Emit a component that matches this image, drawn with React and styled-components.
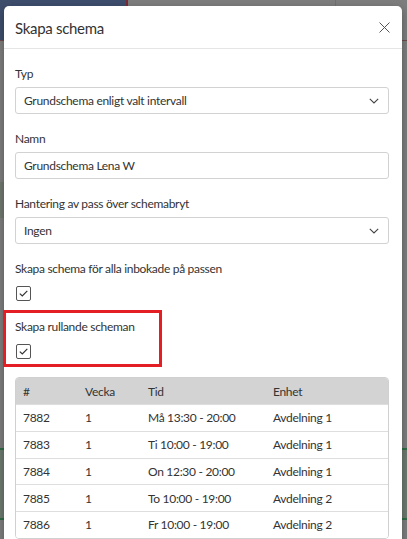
import React from "react";
import styled, { createGlobalStyle } from "styled-components";

const Global = createGlobalStyle`
  *, *::before, *::after { box-sizing: border-box; }
  html, body { margin: 0; padding: 0; }
  body {
    width: 407px; height: 539px; overflow: hidden;
    font-family: Lato, "Open Sans", sans-serif;
    color: #333;
    letter-spacing: -0.3px;
  }
`;

const Page = styled.div`
  position: relative;
  width: 407px;
  height: 539px;
  overflow: hidden;
  background: #7d7d7d;
`;

const Backdrop = styled.div`
  display: flex;
  flex-direction: column;
  height: 100%;
`;

const TopBar = styled.div`
  display: flex;
  height: 41px;
  border-bottom: 1px solid #6e4a4a;
`;

const BrandBlock = styled.div`
  width: 128px;
  background: #3d4d6c;
  border-right: 2px solid #7a2a35;
`;

const TopRest = styled.div`
  flex: 1;
  display: flex;
  justify-content: flex-end;
`;

const TopDivider = styled.div`
  width: 72px;
  border-left: 1px solid #707070;
`;

const MidCell = styled.div`
  margin-top: 141px;
  height: 36px;
  width: 8px;
  background: #6f786f;
`;

const GreenBand = styled.div`
  margin-top: 230px;
  height: 72px;
  background: #6c7a6e;
  border-top: 2px solid #2f6b45;
  border-bottom: 2px solid #2f6b45;
`;

const Modal = styled.div`
  position: absolute;
  left: 4px;
  top: 6px;
  width: 398px;
  height: 560px;
  background: #fff;
  border-radius: 5px;
  box-shadow: 0 3px 9px rgba(0, 0, 0, 0.3);
`;

const Header = styled.div`
  display: flex;
  align-items: center;
  justify-content: space-between;
  height: 43px;
  padding: 0 12px 0 11px;
  border-bottom: 1px solid #e5e5e5;
`;

const Title = styled.h4`
  margin: 0;
  font-size: 15px;
  font-weight: 400;
  color: #333;
  padding-top: 1px;
`;

const CloseButton = styled.button`
  border: 0;
  background: none;
  padding: 0;
  width: 12px;
  height: 12px;
  display: flex;
  align-items: center;
  justify-content: center;
  cursor: pointer;
`;

const Body = styled.div`
  padding: 17px 13px 0 11px;
`;

const Group = styled.div`
  margin-bottom: 17px;
`;

const Label = styled.div`
  font-size: 12px;
  line-height: 16px;
  color: #333;
  margin-bottom: 5px;
`;

const Field = styled.div`
  height: 27px;
  border: 1px solid #d2d2d2;
  border-radius: 3px;
  display: flex;
  align-items: center;
  justify-content: space-between;
  padding: 0 9px 0 8px;
  font-size: 12px;
  color: #333;
`;

const CheckGroup = styled.div`
  display: flex;
  flex-direction: column;
  align-items: flex-start;
`;

const CheckLabel = styled(Label)`
  margin-bottom: 9px;
`;

const Checkbox = styled.div`
  width: 15px;
  height: 15px;
  margin-left: 1px;
  border: 1px solid #555;
  border-radius: 2px;
  display: flex;
  align-items: center;
  justify-content: center;
  background: #fff;
`;

const Highlight = styled.div`
  margin: 9px 0 10px -12px;
  width: 159px;
  border: 3px solid #e31e24;
  padding: 6px 0 5px 9px;
`;

const Table = styled.div`
  border: 1px solid #d0d0d0;
  border-radius: 4px;
  overflow: hidden;
`;

const Row = styled.div`
  display: grid;
  grid-template-columns: 62px 63px 125px 1fr;
  height: ${(p) => (p.$head ? "26px" : "26.75px")};
  align-items: center;
  font-size: 12px;
  color: #333;
  background: ${(p) => (p.$head ? "#d3d3d3" : "#fff")};
  border-top: ${(p) => (p.$first ? "0" : "1px solid #dedede")};
`;

const Cell = styled.div`
  padding-left: 7px;
  white-space: nowrap;
`;

const Chevron = () => (
  <svg width="10" height="6" viewBox="0 0 10 6" fill="none">
    <path d="M0.8 0.8 L5 5 L9.2 0.8" stroke="#444" strokeWidth="1.1" />
  </svg>
);

const Check = () => (
  <svg width="9" height="7" viewBox="0 0 9 7" fill="none">
    <path d="M0.8 3.6 L3.3 6 L8.3 0.8" stroke="#333" strokeWidth="1.2" />
  </svg>
);

const CloseIcon = () => (
  <svg width="11" height="11" viewBox="0 0 11 11" fill="none">
    <path d="M0.5 0.5 L10.5 10.5 M10.5 0.5 L0.5 10.5" stroke="#555" strokeWidth="1" />
  </svg>
);

const rows = [
  ["7882", "1", "Må 13:30 - 20:00", "Avdelning 1"],
  ["7883", "1", "Ti 10:00 - 19:00", "Avdelning 1"],
  ["7884", "1", "On 12:30 - 20:00", "Avdelning 1"],
  ["7885", "1", "To 10:00 - 19:00", "Avdelning 2"],
  ["7886", "1", "Fr 10:00 - 19:00", "Avdelning 2"],
];

export default function App() {
  return (
    <>
      <Global />
      <Page>
        <Backdrop>
          <TopBar>
            <BrandBlock />
            <TopRest>
              <TopDivider />
            </TopRest>
          </TopBar>
          <MidCell />
          <GreenBand />
        </Backdrop>
        <Modal>
          <Header>
            <Title>Skapa schema</Title>
            <CloseButton aria-label="Stäng">
              <CloseIcon />
            </CloseButton>
          </Header>
          <Body>
            <Group>
              <Label>Typ</Label>
              <Field>
                <span>Grundschema enligt valt intervall</span>
                <Chevron />
              </Field>
            </Group>
            <Group>
              <Label>Namn</Label>
              <Field>
                <span>Grundschema Lena W</span>
              </Field>
            </Group>
            <Group>
              <Label>Hantering av pass över schemabryt</Label>
              <Field>
                <span>Ingen</span>
                <Chevron />
              </Field>
            </Group>
            <CheckGroup>
              <CheckLabel>Skapa schema för alla inbokade på passen</CheckLabel>
              <Checkbox>
                <Check />
              </Checkbox>
            </CheckGroup>
            <Highlight>
              <CheckGroup>
                <CheckLabel>Skapa rullande scheman</CheckLabel>
                <Checkbox>
                  <Check />
                </Checkbox>
              </CheckGroup>
            </Highlight>
            <Table>
              <Row $head $first>
                <Cell>#</Cell>
                <Cell>Vecka</Cell>
                <Cell>Tid</Cell>
                <Cell>Enhet</Cell>
              </Row>
              {rows.map((r) => (
                <Row key={r[0]}>
                  {r.map((c, i) => (
                    <Cell key={i}>{c}</Cell>
                  ))}
                </Row>
              ))}
            </Table>
          </Body>
        </Modal>
      </Page>
    </>
  );
}
